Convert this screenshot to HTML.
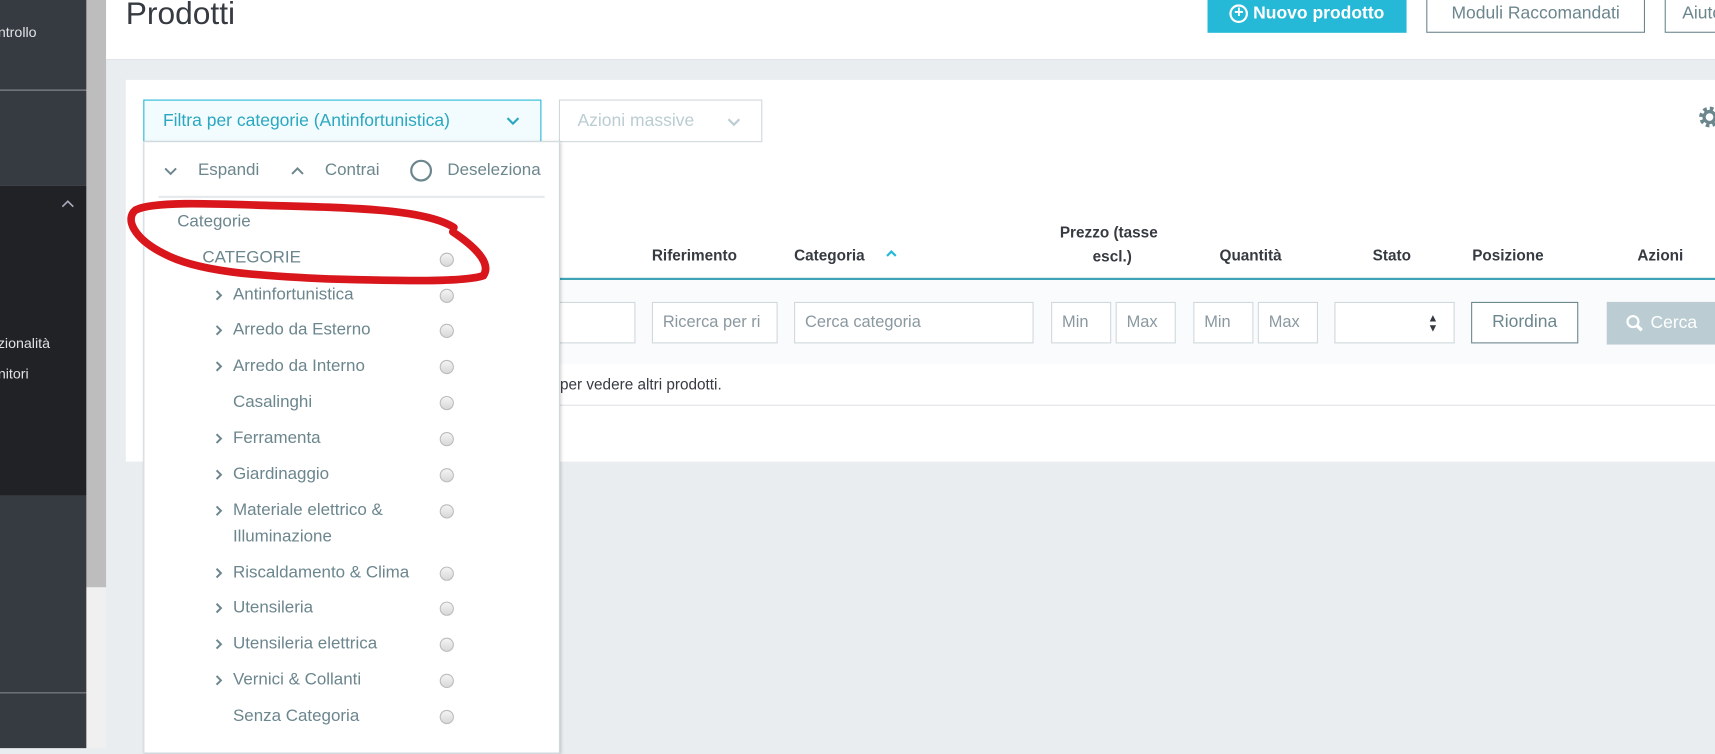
<!DOCTYPE html>
<html><head><meta charset="utf-8"><style>
*{box-sizing:border-box;margin:0;padding:0}
html,body{width:1715px;height:748px;overflow:hidden;background:#eaedef;font-family:"Liberation Sans",sans-serif}
#w{position:absolute;left:0;top:0;width:1568px;height:684px;transform:scale(1.09375);transform-origin:0 0;background:#eaedef}
.a{position:absolute}
.side{left:0;width:79px;background:#363a41}
.t{position:absolute;white-space:nowrap}
.inp{position:absolute;top:276px;height:38px;border:1px solid #cfd8dc;background:#fff;color:#8a98a0;font-size:15px;line-height:36px;padding-left:9px}
.th{position:absolute;font-weight:bold;font-size:14px;color:#363a41;white-space:nowrap}
.item{position:absolute;left:213px;font-size:15.5px;color:#6c868e;white-space:nowrap}
.chev{position:absolute;left:196px;width:8px;height:12px}
.rad{position:absolute;left:402px;width:13px;height:13px;border-radius:50%;border:1px solid #bbb;background:linear-gradient(#f4f4f4,#d8d8d8)}
</style></head><body><div id="w">
<svg width="0" height="0" style="position:absolute"><defs><symbol id="cr" viewBox="0 0 8 12"><path d="M2 2 L6 6 L2 10" fill="none" stroke="#6c868e" stroke-width="1.8"/></symbol></defs></svg>
<div class="a side" style="top:0;height:82px"></div>
<div class="a" style="left:0;top:82px;width:79px;height:1px;background:#6c7077"></div>
<div class="a side" style="top:83px;height:87px"></div>
<div class="a" style="left:0;top:170px;width:79px;height:283px;background:#202226"></div>
<div class="a side" style="top:453px;height:180px"></div>
<div class="a" style="left:0;top:633px;width:79px;height:1px;background:#6c7077"></div>
<div class="a side" style="top:634px;height:50px"></div>
<div class="t" style="left:-2px;top:22px;color:#dfe3e6;font-size:13px">ntrollo</div>
<svg class="a" style="left:55px;top:181px" width="14" height="10"><path d="M2 8 L7 3 L12 8" fill="none" stroke="#aab" stroke-width="1.5"/></svg>
<div class="t" style="left:-2px;top:306px;color:#dfe3e6;font-size:13px">zionalità</div>
<div class="t" style="left:-2px;top:334px;color:#dfe3e6;font-size:13px">nitori</div>
<div class="a" style="left:79px;top:0;width:18px;height:537px;background:#bdbdbd"></div>
<div class="a" style="left:79px;top:537px;width:18px;height:147px;background:#f0f0f0"></div>
<div class="a" style="left:97px;top:0;width:1471px;height:55px;background:#fff;border-bottom:1px solid #dfe3e6"></div>
<div class="t" style="left:115px;top:-3px;font-size:29px;color:#363a41">Prodotti</div>
<div class="a" style="left:1104px;top:0;width:182px;height:30px;background:#25b9d7;color:#fff;font-size:16px;font-weight:bold;line-height:26px;text-align:center"><span style="display:inline-block;width:17px;height:17px;border:2px solid #fff;border-radius:50%;line-height:12px;font-size:15px;vertical-align:1px">+</span> Nuovo prodotto</div>
<div class="a" style="left:1304px;top:-2px;width:200px;height:32px;border:1px solid #6c868e;background:#fff;color:#6c868e;font-size:16px;line-height:28px;text-align:center">Moduli Raccomandati</div>
<div class="a" style="left:1522px;top:-2px;width:60px;height:32px;border:1px solid #6c868e;background:#fff;color:#6c868e;font-size:16px;line-height:28px;padding-left:15px">Aiuto</div>
<div class="a" style="left:115px;top:73px;width:1453px;height:349px;background:#fff"></div>
<div class="a" style="left:131px;top:91px;width:364px;height:39px;background:#f2fbfd;border:1px solid #25b9d7;color:#2aa8c1;font-size:16px;line-height:37px;padding-left:17px">Filtra per categorie (Antinfortunistica)<svg style="position:absolute;left:330px;top:14px" width="14" height="10"><path d="M2 2 L7 7 L12 2" fill="none" stroke="#2aa8c1" stroke-width="2"/></svg></div>
<div class="a" style="left:511px;top:91px;width:186px;height:39px;border:1px solid #cfd8dc;color:#bbcdd2;font-size:16px;line-height:37px;padding-left:16px">Azioni massive<svg style="position:absolute;left:152px;top:15px" width="14" height="10"><path d="M2 2 L7 7 L12 2" fill="none" stroke="#bbcdd2" stroke-width="2"/></svg></div>
<svg class="a" style="left:1552px;top:96px" width="20" height="22" viewBox="0 0 20 22"><circle cx="11" cy="11" r="7" fill="none" stroke="#6c868e" stroke-width="5" stroke-dasharray="3 2.5"/><circle cx="11" cy="11" r="5" fill="none" stroke="#6c868e" stroke-width="3"/></svg>
<div class="th" style="left:596px;top:225px">Riferimento</div>
<div class="th" style="left:726px;top:225px">Categoria</div>
<svg class="a" style="left:809px;top:227px" width="12" height="10"><path d="M2 7 L6 3 L10 7" fill="none" stroke="#25b9d7" stroke-width="2"/></svg>
<div class="th" style="left:969px;top:204px">Prezzo (tasse</div>
<div class="th" style="left:999px;top:226px">escl.)</div>
<div class="th" style="left:1115px;top:225px">Quantità</div>
<div class="th" style="left:1255px;top:225px">Stato</div>
<div class="th" style="left:1346px;top:225px">Posizione</div>
<div class="th" style="left:1497px;top:225px">Azioni</div>
<div class="a" style="left:500px;top:254px;width:1068px;height:2px;background:#3ea4b5"></div>
<div class="a" style="left:500px;top:256px;width:1068px;height:77px;background:#fafbfc"></div>
<div class="inp" style="left:480px;width:101px"></div>
<div class="inp" style="left:596px;width:115px">Ricerca per ri</div>
<div class="inp" style="left:726px;width:219px">Cerca categoria</div>
<div class="inp" style="left:961px;width:55px">Min</div>
<div class="inp" style="left:1020px;width:55px">Max</div>
<div class="inp" style="left:1091px;width:55px">Min</div>
<div class="inp" style="left:1150px;width:55px">Max</div>
<div class="inp" style="left:1220px;width:110px"><span style="position:absolute;right:14px;color:#363a41;font-size:10px;line-height:9px;top:10px">&#9650;<br>&#9660;</span></div>
<div class="inp" style="left:1345px;width:98px;border-color:#6c868e;color:#6c868e;font-size:16px;text-align:center;padding:0">Riordina</div>
<div class="a" style="left:1469px;top:276px;width:110px;height:39px;background:#bbcdd2;color:#fff;font-size:16px;line-height:39px;padding-left:40px">Cerca</div>
<svg class="a" style="left:1486px;top:287px" width="18" height="18"><circle cx="7" cy="7" r="5" fill="none" stroke="#fff" stroke-width="2"/><path d="M10.5 10.5 L15 15" stroke="#fff" stroke-width="3"/></svg>
<div class="t" style="left:512px;top:343px;font-size:14px;color:#363a41">per vedere altri prodotti.</div>
<div class="a" style="left:500px;top:370px;width:1068px;height:1px;background:#dfe3e6"></div>
<div class="a" style="left:131px;top:129px;width:381px;height:560px;background:#fff;border:1px solid #cfd8dc;box-shadow:1px 1px 3px rgba(0,0,0,.2)"></div>
<svg class="a" style="left:149px;top:152px" width="14" height="10"><path d="M2 2 L7 7 L12 2" fill="none" stroke="#6c868e" stroke-width="1.8"/></svg>
<div class="t" style="left:181px;top:147px;font-size:15.5px;color:#6c868e">Espandi</div>
<svg class="a" style="left:265px;top:151px" width="14" height="10"><path d="M2 8 L7 3 L12 8" fill="none" stroke="#6c868e" stroke-width="1.8"/></svg>
<div class="t" style="left:297px;top:147px;font-size:15.5px;color:#6c868e">Contrai</div>
<div class="a" style="left:375px;top:146px;width:20px;height:20px;border:2px solid #6c868e;border-radius:50%"></div>
<div class="t" style="left:409px;top:147px;font-size:15.5px;color:#6c868e">Deseleziona</div>
<div class="a" style="left:145px;top:179px;width:353px;height:2px;background:#e6eaec"></div>
<div class="item" style="left:162px;top:194px">Categorie</div>
<div class="item" style="left:185px;top:227px">CATEGORIE</div><div class="rad" style="top:231px"></div>
<svg class="chev" style="top:264px"><use href="#cr"/></svg><div class="item" style="top:261px">Antinfortunistica</div><div class="rad" style="top:264px"></div>
<svg class="chev" style="top:296px"><use href="#cr"/></svg><div class="item" style="top:293px">Arredo da Esterno</div><div class="rad" style="top:296px"></div>
<svg class="chev" style="top:329px"><use href="#cr"/></svg><div class="item" style="top:326px">Arredo da Interno</div><div class="rad" style="top:329px"></div>
<div class="item" style="top:359px">Casalinghi</div><div class="rad" style="top:362px"></div>
<svg class="chev" style="top:395px"><use href="#cr"/></svg><div class="item" style="top:392px">Ferramenta</div><div class="rad" style="top:395px"></div>
<svg class="chev" style="top:428px"><use href="#cr"/></svg><div class="item" style="top:425px">Giardinaggio</div><div class="rad" style="top:428px"></div>
<svg class="chev" style="top:461px"><use href="#cr"/></svg><div class="item" style="top:458px">Materiale elettrico &amp;</div><div class="rad" style="top:461px"></div>
<div class="item" style="top:482px">Illuminazione</div>
<svg class="chev" style="top:518px"><use href="#cr"/></svg><div class="item" style="top:515px">Riscaldamento &amp; Clima</div><div class="rad" style="top:518px"></div>
<svg class="chev" style="top:550px"><use href="#cr"/></svg><div class="item" style="top:547px">Utensileria</div><div class="rad" style="top:550px"></div>
<svg class="chev" style="top:583px"><use href="#cr"/></svg><div class="item" style="top:580px">Utensileria elettrica</div><div class="rad" style="top:583px"></div>
<svg class="chev" style="top:616px"><use href="#cr"/></svg><div class="item" style="top:613px">Vernici &amp; Collanti</div><div class="rad" style="top:616px"></div>
<div class="item" style="top:646px">Senza Categoria</div><div class="rad" style="top:649px"></div>
<svg class="a" style="left:0;top:0" width="600" height="300"><path d="M415 208 C390 192 330 190 250 188 C190 186 140 184 124 192 C114 200 122 218 150 232 C180 248 230 252 300 255 C370 257 425 258 442 252 C450 240 432 224 414 212" fill="none" stroke="#d8161c" stroke-width="7" stroke-linecap="round"/></svg>
</div></body></html>
